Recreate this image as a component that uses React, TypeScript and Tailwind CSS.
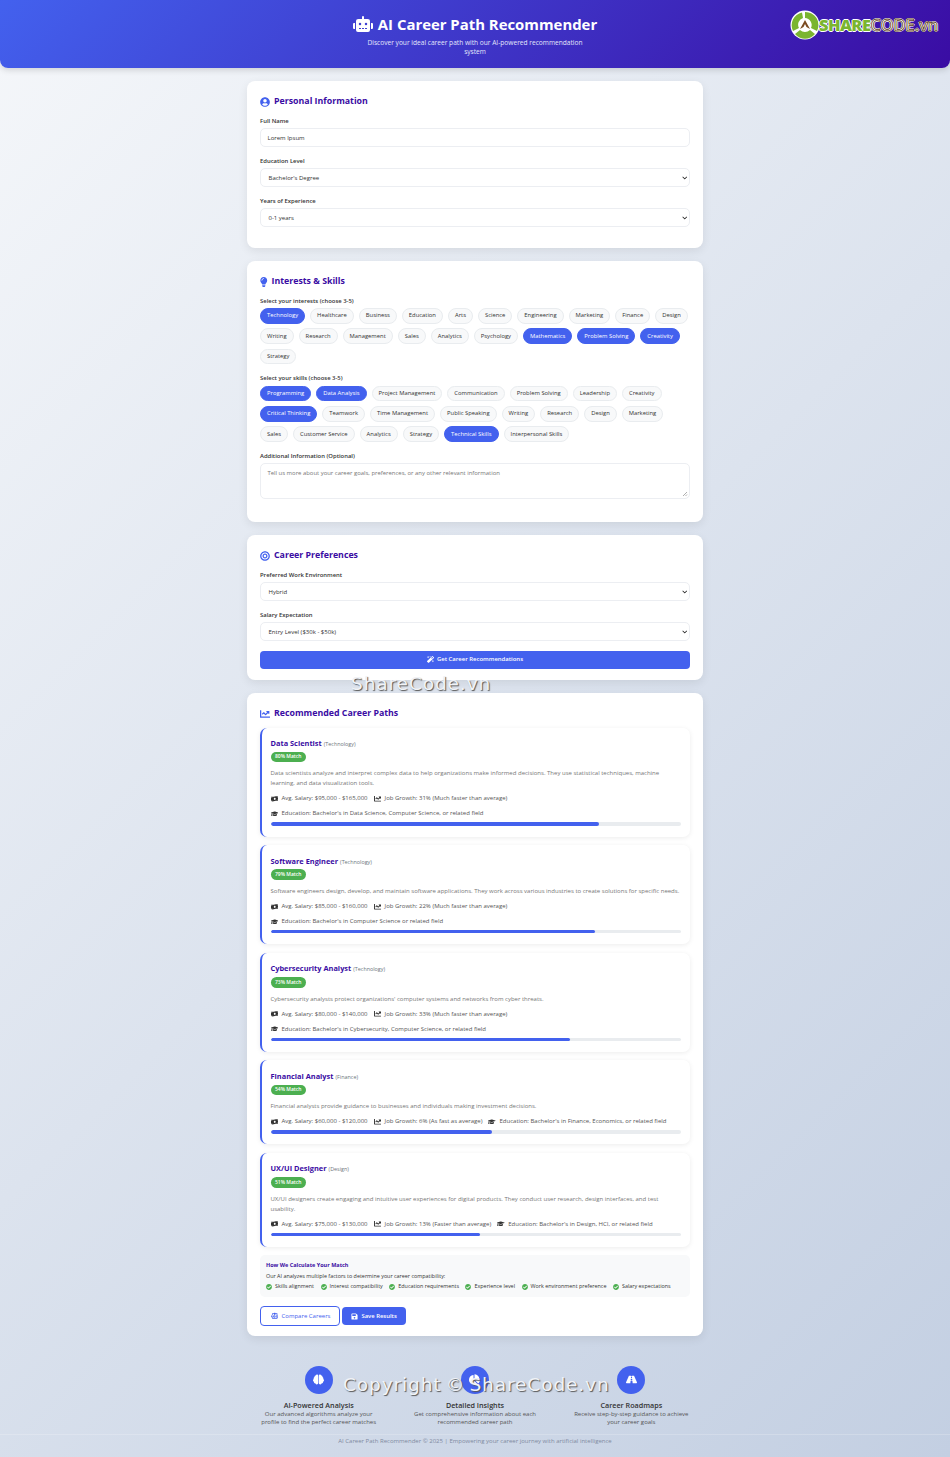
import React from 'react'
import {
  FaRobot, FaUserCircle, FaLightbulb, FaBullseye, FaChartLine, FaMoneyBillWave, FaGraduationCap,
  FaCheckCircle, FaBalanceScale, FaSave, FaMagic, FaBrain, FaChartPie, FaRoad, FaChevronDown,
} from 'react-icons/fa'

const interests = [
  ['Technology', 1], ['Healthcare'], ['Business'], ['Education'], ['Arts'], ['Science'], ['Engineering'], ['Marketing'], ['Finance'], ['Design'],
  ['Writing'], ['Research'], ['Management'], ['Sales'], ['Analytics'], ['Psychology'], ['Mathematics', 1], ['Problem Solving', 1], ['Creativity', 1], ['Strategy'],
] as [string, number?][]

const skills = [
  ['Programming', 1], ['Data Analysis', 1], ['Project Management'], ['Communication'], ['Problem Solving'], ['Leadership'], ['Creativity'],
  ['Critical Thinking', 1], ['Teamwork'], ['Time Management'], ['Public Speaking'], ['Writing'], ['Research'], ['Design'], ['Marketing'],
  ['Sales'], ['Customer Service'], ['Analytics'], ['Strategy'], ['Technical Skills', 1], ['Interpersonal Skills'],
] as [string, number?][]

const careers = [
  {
    title: 'Data Scientist', field: 'Technology', match: 80,
    desc: 'Data scientists analyze and interpret complex data to help organizations make informed decisions. They use statistical techniques, machine learning, and data visualization tools.',
    salary: '$95,000 - $165,000', growth: '31% (Much faster than average)', edu: "Bachelor's in Data Science, Computer Science, or related field",
  },
  {
    title: 'Software Engineer', field: 'Technology', match: 79,
    desc: 'Software engineers design, develop, and maintain software applications. They work across various industries to create solutions for specific needs.',
    salary: '$85,000 - $160,000', growth: '22% (Much faster than average)', edu: "Bachelor's in Computer Science or related field",
  },
  {
    title: 'Cybersecurity Analyst', field: 'Technology', match: 73,
    desc: "Cybersecurity analysts protect organizations' computer systems and networks from cyber threats.",
    salary: '$80,000 - $140,000', growth: '33% (Much faster than average)', edu: "Bachelor's in Cybersecurity, Computer Science, or related field",
  },
  {
    title: 'Financial Analyst', field: 'Finance', match: 54,
    desc: 'Financial analysts provide guidance to businesses and individuals making investment decisions.',
    salary: '$60,000 - $120,000', growth: '6% (As fast as average)', edu: "Bachelor's in Finance, Economics, or related field",
  },
  {
    title: 'UX/UI Designer', field: 'Design', match: 51,
    desc: 'UX/UI designers create engaging and intuitive user experiences for digital products. They conduct user research, design interfaces, and test usability.',
    salary: '$75,000 - $130,000', growth: '13% (Faster than average)', edu: "Bachelor's in Design, HCI, or related field",
  },
]

const factors = ['Skills alignment', 'Interest compatibility', 'Education requirements', 'Experience level', 'Work environment preference', 'Salary expectations']

const features = [
  { icon: FaBrain, title: 'AI-Powered Analysis', text: ['Our advanced algorithms analyze your', 'profile to find the perfect career matches'] },
  { icon: FaChartPie, title: 'Detailed Insights', text: ['Get comprehensive information about each', 'recommended career path'] },
  { icon: FaRoad, title: 'Career Roadmaps', text: ['Receive step-by-step guidance to achieve', 'your career goals'] },
]

const Card = ({ icon: Icon, title, iconClass = 'w-[10px] mr-[4px]', children, className = '' }: any) => (
  <section className={`bg-white rounded-[8px] p-[13px] shadow-[0_3px_10px_rgba(0,0,0,0.08)] ${className}`}>
    <h2 className="flex items-center h-[14px] mt-[1px] mb-[8px] text-[8.8px] font-bold text-[#3a0ca3]">
      <Icon className={`text-[#4361ee] h-[10px] shrink-0 ${iconClass}`} />
      {title}
    </h2>
    {children}
  </section>
)

const Label = ({ children }: any) => <div className="text-[5.9px] font-semibold text-[#333] h-[8px] leading-[8px] mb-[3px]">{children}</div>

const Input = ({ children, select = false }: any) => (
  <div className={`relative flex items-center h-[19px] pt-[1px] bg-white border border-[#eceef2] rounded-[5px] text-[6px] text-[#333] ${select ? 'pl-[7.5px]' : 'pl-[6.5px]'}`}>
    {children}
    {select && <FaChevronDown className="absolute right-[2px] top-1/2 -translate-y-1/2 text-[5.5px] text-[#222]" />}
  </div>
)

const Chips = ({ items }: { items: [string, number?][] }) => (
  <div className="flex flex-wrap gap-x-[5px] gap-y-[4.7px]">
    {items.map(([name, on]) => (
      <span
        key={name}
        className={`flex items-center h-[15.6px] px-[6px] rounded-full border text-[5.85px] ${on ? 'bg-[#4361ee] border-[#4361ee] text-white' : 'bg-[#f8f9fa] border-[#e9ecef] text-[#333]'}`}
      >
        {name}
      </span>
    ))}
  </div>
)

const Meta = ({ icon: Icon, children }: any) => (
  <span className="flex items-center h-[10px]">
    <Icon className="text-[#333] text-[7.5px] mr-[3.5px]" />
    {children}
  </span>
)

const CareerCard = ({ c }: any) => (
  <div className="bg-white rounded-[7px] border-l-[2px] border-[#4361ee] pl-[8.5px] pr-[9px] pt-[10.5px] pb-[10.7px] mb-[8.5px] shadow-[0_1px_5px_rgba(0,0,0,0.08)]">
    <div className="flex items-baseline h-[11px] leading-[11px]">
      <span className="text-[7.4px] font-bold text-[#3a0ca3]">{c.title}</span>
      <span className="text-[5.4px] text-[#6c757d] ml-[2px]">({c.field})</span>
    </div>
    <div className="mt-[2.9px] flex">
      <span className="flex items-center h-[10.5px] px-[4.5px] rounded-full bg-[#4caf50] text-white text-[5px] font-semibold">{c.match}% Match</span>
    </div>
    <p className="mt-[6px] text-[6px] leading-[10px] text-[#777]">{c.desc}</p>
    <div className="mt-[5.5px] flex flex-wrap gap-x-[6px] gap-y-[5px] text-[6px] text-[#555]">
      <Meta icon={FaMoneyBillWave}>Avg. Salary: {c.salary}</Meta>
      <Meta icon={FaChartLine}>Job Growth: {c.growth}</Meta>
      <Meta icon={FaGraduationCap}>Education: {c.edu}</Meta>
    </div>
    <div className="mt-[3.5px] h-[3.5px] rounded-full bg-[#e9ecef] overflow-hidden">
      <div className="h-full bg-[#4361ee] rounded-full" style={{ width: `${c.match}%` }} />
    </div>
  </div>
)

const Logo = () => (
  <div className="absolute left-[790px] top-[10px] flex items-center h-[30px]">
    <svg width="30" height="30" viewBox="0 0 30 30" className="shrink-0">
      <circle cx="15" cy="15" r="14.5" fill="#fff" />
      <path d="M15 2 A13 13 0 0 1 27 21 L21 18 A7 7 0 0 0 15 8 Z" fill="#7ab52f" />
      <path d="M25 24 A13 13 0 0 1 5 24 L10 20 A7 7 0 0 0 20 20 Z" fill="#7ab52f" />
      <path d="M3 21 A13 13 0 0 1 12 2.5 L13 8 A7 7 0 0 0 9 18 Z" fill="#7ab52f" />
      <path d="M15 10 L20 19 L16.5 17 L15 14 L13.5 17 L10 19 Z" fill="#7a4a20" />
    </svg>
    <span className="ml-[-1px] text-[16.5px] font-extrabold tracking-[-0.6px] text-[#7ab52f] [text-shadow:1px_0_#fff,-1px_0_#fff,0_1px_#fff,0_-1px_#fff]">SHARE</span>
    <span className="text-[16.5px] font-semibold tracking-[-0.1px] text-white [-webkit-text-stroke:0.8px_#5a3715] [text-shadow:1px_0_#fff,-1px_0_#fff,0_1px_#fff,0_-1px_#fff]">CODE.vn</span>
  </div>
)

export default function App() {
  return (
    <div className="relative w-[950px] h-[1457px] overflow-hidden bg-[linear-gradient(135deg,#f5f7fa_0%,#c3cfe2_100%)] font-['Open_Sans',sans-serif] text-[#333]">
      <header className="h-[68px] rounded-b-[8px] bg-[linear-gradient(135deg,#4361ee,#3a0ca3)] shadow-[0_2px_6px_rgba(0,0,0,0.15)] text-white flex flex-col items-center pt-[13px]">
        <h1 className="flex items-center h-[22px] text-[14.9px] font-bold">
          <FaRobot className="text-[20px] mr-[5px]" />
          AI Career Path Recommender
        </h1>
        <p className="w-[230px] mt-[3px] text-center text-[6.6px] leading-[9.4px] text-[#e3e6fb]">
          Discover your ideal career path with our AI-powered recommendation system
        </p>
      </header>
      <Logo />

      <main className="w-[456px] mx-auto mt-[13px] flex flex-col gap-[13px]">
        <Card icon={FaUserCircle} title="Personal Information" className="h-[167px]">
          <Label>Full Name</Label>
          <Input>Lorem Ipsum</Input>
          <div className="mt-[10px]"><Label>Education Level</Label></div>
          <Input select>Bachelor's Degree</Input>
          <div className="mt-[10px]"><Label>Years of Experience</Label></div>
          <Input select>0-1 years</Input>
        </Card>

        <Card icon={FaLightbulb} title="Interests & Skills" iconClass="w-[7.5px] mr-[4px]" className="h-[261px]">
          <Label>Select your interests (choose 3-5)</Label>
          <Chips items={interests} />
          <div className="mt-[9.6px] mb-[4px]"><Label>Select your skills (choose 3-5)</Label></div>
          <Chips items={skills} />
          <div className="mt-[10px]"><Label>Additional Information (Optional)</Label></div>
          <div className="relative h-[36px] border border-[#eceef2] rounded-[5px] px-[6.5px] pt-[5px] text-[5.93px] text-[#777]">
            Tell us more about your career goals, preferences, or any other relevant information
            <svg width="6" height="6" viewBox="0 0 6 6" className="absolute right-[1px] bottom-[1px]"><path d="M1 5 L5 1 M3.5 5 L5 3.5" stroke="#777" strokeWidth="0.6" /></svg>
          </div>
        </Card>

        <Card icon={FaBullseye} title="Career Preferences" className="h-[145px]">
          <Label>Preferred Work Environment</Label>
          <Input select>Hybrid</Input>
          <div className="mt-[10px]"><Label>Salary Expectation</Label></div>
          <Input select>Entry Level ($30k - $50k)</Input>
          <button className="mt-[9.5px] w-full h-[18px] flex items-center justify-center rounded-[4px] bg-[#4361ee] text-white text-[5.95px] font-semibold">
            <FaMagic className="text-[7px] mr-[3px]" />
            Get Career Recommendations
          </button>
        </Card>

        <Card icon={FaChartLine} title="Recommended Career Paths" className="h-[643px]">
          <div className="-mt-[1.5px]">
            {careers.map(c => <CareerCard key={c.title} c={c} />)}
          </div>
          <div className="rounded-[5px] bg-[#f8f9fa] px-[6px] py-[4.5px] mt-[1.5px]">
            <div className="text-[5.5px] font-bold text-[#3a0ca3] leading-[11px]">How We Calculate Your Match</div>
            <div className="text-[5.4px] text-[#333] leading-[10.5px]">Our AI analyzes multiple factors to determine your career compatibility:</div>
            <div className="flex gap-x-[6.5px] text-[5.4px] text-[#333] leading-[11px]">
              {factors.map(f => (
                <span key={f} className="flex items-center">
                  <FaCheckCircle className="text-[#4caf50] text-[6px] mr-[3px]" />
                  {f}
                </span>
              ))}
            </div>
          </div>
          <div className="flex items-center gap-[2px] mt-[9.6px]">
            <button className="flex items-center h-[19.3px] pl-[9.5px] pr-[9px] rounded-[4px] border border-[#4361ee] bg-white text-[#4361ee] text-[6px]">
              <FaBalanceScale className="text-[7.5px] mr-[3.5px]" />
              Compare Careers
            </button>
            <button className="flex items-center h-[18px] px-[9px] rounded-[4px] bg-[#4361ee] text-white text-[5.9px] font-semibold">
              <FaSave className="text-[7px] mr-[3px]" />
              Save Results
            </button>
          </div>
        </Card>
      </main>

      <section className="w-[456px] mx-auto mt-[29.7px] grid grid-cols-3 gap-[13px] text-center">
        {features.map(f => (
          <div key={f.title} className="flex flex-col items-center">
            <div className="w-[28px] h-[28px] rounded-full bg-[#4361ee] text-white flex items-center justify-center text-[11px]">
              <f.icon />
            </div>
            <div className="mt-[6px] text-[7.2px] font-semibold text-[#333] leading-[10px]">{f.title}</div>
            <div className="text-[6px] text-[#555] leading-[8.7px]">
              {f.text.map(t => <div key={t}>{t}</div>)}
            </div>
          </div>
        ))}
      </section>
      <footer className="mt-[7px] pt-[1px] border-t border-white/20 text-center text-[6px] text-[#7f8aa0] leading-[10px]">
        AI Career Path Recommender © 2025 | Empowering your career journey with artificial intelligence
      </footer>

      {/* site watermarks stamped over the page */}
      <div className="absolute left-[351px] top-[673px] text-[18.5px] leading-[22px] tracking-[0.9px] font-['DejaVu_Sans',sans-serif] text-[#f1f3f7] [text-shadow:1px_1px_1px_#555]">ShareCode.vn</div>
      <div className="absolute left-[343px] top-[1374px] text-[18.5px] leading-[22px] tracking-[0.9px] [word-spacing:-2.5px] font-['DejaVu_Sans',sans-serif] text-[#f1f3f7] [text-shadow:1px_1px_1px_#555]">Copyright © ShareCode.vn</div>
    </div>
  )
}
